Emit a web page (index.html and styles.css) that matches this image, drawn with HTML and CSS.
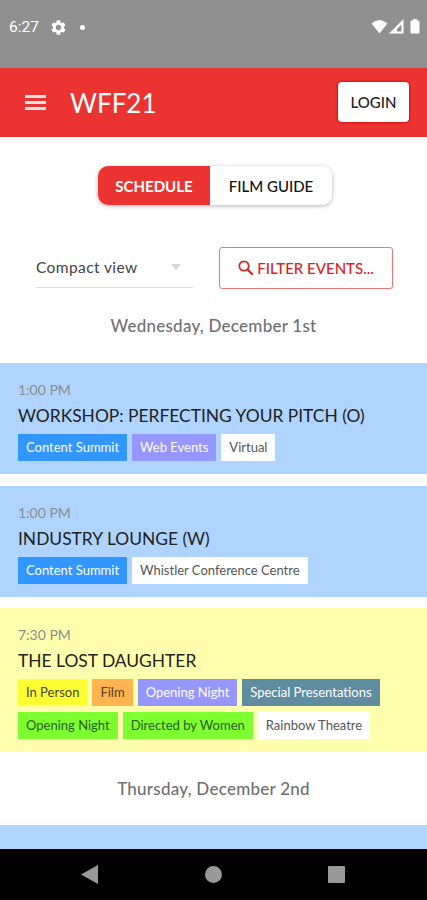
FILE: index.html
```html
<!DOCTYPE html>
<html lang="en">
<head>
  <meta charset="UTF-8">
  <meta name="viewport" content="width=device-width, initial-scale=1.0">
  <title>WFF21</title>
  <link rel="stylesheet" href="styles.css">
</head>
<body>
  <div class="status-bar">
    <span class="clock">6:27</span>
    <svg class="gear" width="15" height="15" viewBox="2 2 20 20"><path fill="#fff" d="M19.14 12.94c.04-.3.06-.61.06-.94 0-.32-.02-.64-.07-.94l2.03-1.58c.18-.14.23-.41.12-.61l-1.92-3.32c-.12-.22-.37-.29-.59-.22l-2.39.96c-.5-.38-1.03-.7-1.62-.94l-.36-2.54c-.04-.24-.24-.41-.48-.41h-3.84c-.24 0-.43.17-.47.41l-.36 2.54c-.59.24-1.13.57-1.62.94l-2.39-.96c-.22-.08-.47 0-.59.22L2.74 8.87c-.12.21-.08.47.12.61l2.03 1.58c-.05.3-.09.63-.09.94s.02.64.07.94l-2.03 1.58c-.18.14-.23.41-.12.61l1.92 3.32c.12.22.37.29.59.22l2.39-.96c.5.38 1.03.7 1.62.94l.36 2.54c.05.24.24.41.48.41h3.84c.24 0 .44-.17.47-.41l.36-2.54c.59-.24 1.13-.56 1.62-.94l2.39.96c.22.08.47 0 .59-.22l1.92-3.32c.12-.22.07-.47-.12-.61l-2.01-1.58zM12 15.6c-1.98 0-3.6-1.62-3.6-3.6s1.62-3.6 3.6-3.6 3.6 1.62 3.6 3.6-1.62 3.6-3.6 3.6z"/></svg>
    <span class="dot"></span>
    <svg class="signals" width="50" height="16" viewBox="0 0 50 16">
      <path fill="#fff" d="M0.500 4.500Q8.500-2.500 16.500 4.500L8.500 14.500z"/>
      <path fill="#fff" fill-rule="evenodd" d="M32.500 0v14.500H18zM30.500 5.500L26 10v2.500h4.500z"/>
      <path fill="#fff" d="M42 0h4v1.500h1.500q1 0 1 1v11q0 1-1 1h-7q-1 0-1-1v-11q0-1 1-1H42z"/>
    </svg>
  </div>

  <header class="app-bar">
    <div class="menu"><span></span><span></span><span></span></div>
    <h1>WFF21</h1>
    <button class="login">LOGIN</button>
  </header>

  <main>
    <div class="tabs">
      <button class="tab active">SCHEDULE</button>
      <button class="tab">FILM GUIDE</button>
    </div>

    <div class="controls">
      <div class="select"><span>Compact view</span><i class="arrow"></i></div>
      <button class="filter">
        <svg width="16" height="16" viewBox="0 0 16 16"><circle cx="6" cy="6" r="4.700" fill="none" stroke="#db2323" stroke-width="1.800"/><path d="M9.500 9.500l5.300 5.300" stroke="#db2323" stroke-width="2.300"/></svg>
        <span>FILTER EVENTS...</span>
      </button>
    </div>

    <h2 class="day">Wednesday, December 1st</h2>

    <section class="event blue">
      <div class="time">1:00 PM</div>
      <h3>WORKSHOP: PERFECTING YOUR PITCH (O)</h3>
      <div class="tags">
        <span class="tag summit">Content Summit</span>
        <span class="tag violet">Web Events</span>
        <span class="tag">Virtual</span>
      </div>
    </section>

    <section class="event blue">
      <div class="time">1:00 PM</div>
      <h3>INDUSTRY LOUNGE (W)</h3>
      <div class="tags">
        <span class="tag summit">Content Summit</span>
        <span class="tag">Whistler Conference Centre</span>
      </div>
    </section>

    <section class="event yellow">
      <div class="time">7:30 PM</div>
      <h3>THE LOST DAUGHTER</h3>
      <div class="tags">
        <span class="tag in-person">In Person</span>
        <span class="tag film">Film</span>
        <span class="tag violet">Opening Night</span>
        <span class="tag special">Special Presentations</span>
        <span class="tag green">Opening Night</span>
        <span class="tag green">Directed by Women</span>
        <span class="tag">Rainbow Theatre</span>
      </div>
    </section>

    <h2 class="day next">Thursday, December 2nd</h2>

    <section class="event blue"></section>
  </main>

  <nav class="nav-bar">
    <svg width="17" height="19" viewBox="0 0 17 19"><path fill="#999" d="M17 0v19L0 9.500z"/></svg>
    <span class="home"></span>
    <span class="recent"></span>
  </nav>
</body>
</html>
```
FILE: styles.css
```css
* {
  box-sizing: border-box;
}
body {
  font-family: Lato, sans-serif;
  margin: 0;
  height: 900px;
  display: flex;
  flex-direction: column;
  overflow: hidden;
  background-color: #fff;
}
h1, h2, h3 {
  margin: 0;
  font-weight: 400;
}
button {
  font-family: inherit;
  border: 0;
  padding: 0;
  background: #fff;
  white-space: nowrap;
}
.status-bar {
  height: 68px;
  flex: none;
  display: flex;
  align-items: center;
  padding: 0 6px 14px 9px;
  background-color: #909090;
  color: #fff;
}
.clock {
  font-family: Roboto, sans-serif;
  font-size: 15.500px;
  width: 42px;
}
.gear {
  flex: none;
}
.dot {
  width: 5px;
  height: 5px;
  border-radius: 50%;
  background: #fff;
  margin-left: 14px;
}
.signals {
  margin-left: auto;
}
.app-bar {
  height: 69px;
  flex: none;
  display: flex;
  align-items: center;
  padding: 0 18px 0 25px;
  background-color: #eb3431;
}
.menu {
  width: 21px;
  display: grid;
  gap: 3px;
}
.menu span {
  height: 3px;
  background: #ffe3e1;
}
.app-bar h1 {
  margin-left: 24px;
  font-size: 26px;
  color: #fff;
}
.login {
  margin-left: auto;
  width: 71px;
  height: 40px;
  margin-bottom: 2px;
  border-radius: 4px;
  box-shadow: 0 0 2px 1px #d80f0f;
  font-size: 15px;
  font-weight: 500;
  color: #222;
}
main {
  flex: 1;
  min-height: 0;
  overflow: hidden;
}
.tabs {
  display: flex;
  width: 234px;
  height: 39px;
  margin: 29px auto 0 98px;
  border-radius: 10px;
  overflow: hidden;
  box-shadow: 0 1px 4px rgba(0, 0, 0, 0.3);
}
.tab {
  flex: 1;
  font-size: 15px;
  font-weight: 500;
  color: #111;
}
.tab.active {
  flex: 0 0 112px;
  background: #eb3431;
  color: #fff;
  font-weight: 700;
}
.controls {
  display: flex;
  justify-content: space-between;
  margin: 42px 34px 0 36px;
}
.select {
  display: flex;
  align-items: center;
  justify-content: space-between;
  width: 157px;
  height: 41px;
  padding-right: 12px;
  border-bottom: 1px solid #ddd;
  font-size: 15.500px;
  letter-spacing: 0.4px;
  color: #444;
}
.arrow {
  border: 5px solid transparent;
  border-top: 6px solid #d5d5d5;
  border-bottom: 0;
}
.filter {
  display: flex;
  align-items: center;
  justify-content: center;
  gap: 3px;
  width: 174px;
  height: 42px;
  border: 1px solid #ee7777;
  border-radius: 3px;
  font-size: 15px;
  font-weight: 500;
  color: #db2323;
}
.day {
  height: 74px;
  line-height: 74px;
  text-align: center;
  font-size: 17px;
  font-weight: 500;
  letter-spacing: 0.25px;
  color: #707070;
}
.day.next {
  height: 73px;
}
.event {
  height: 111px;
  padding: 17px 18px 0;
}
.event + .event {
  margin-top: 11.500px;
}
.blue {
  background-color: #aed4ff;
}
.event.yellow {
  height: 144px;
  background-color: #ffffae;
}
.time {
  font-size: 14px;
  line-height: 20px;
  color: #8c8c8c;
}
.event h3 {
  font-size: 17.400px;
  line-height: 31px;
  white-space: nowrap;
  color: #222;
}
.tags {
  display: flex;
  flex-wrap: wrap;
  gap: 6px 5px;
  margin-top: 3px;
}
.tag {
  height: 27px;
  line-height: 27px;
  padding: 0 8px;
  font-size: 13px;
  white-space: nowrap;
  background: #fff;
  color: #555;
}
.summit {
  background: #3296ff;
  color: #fff;
}
.violet {
  background: #9696ff;
  color: #fff;
}
.in-person {
  background: #ffff32;
  color: #444;
}
.film {
  background: #ffb450;
  color: #553a1c;
}
.special {
  background: #5f8ca0;
  color: #fff;
}
.green {
  background: #7dff32;
  color: #2f5a20;
}
.nav-bar {
  height: 51px;
  flex: none;
  display: flex;
  align-items: center;
  justify-content: space-between;
  padding: 0 82px 0 81px;
  background-color: #000;
}
.home {
  width: 17px;
  height: 17px;
  border-radius: 50%;
  background: #999;
}
.recent {
  width: 17px;
  height: 17px;
  border-radius: 1px;
  background: #999;
}
```
